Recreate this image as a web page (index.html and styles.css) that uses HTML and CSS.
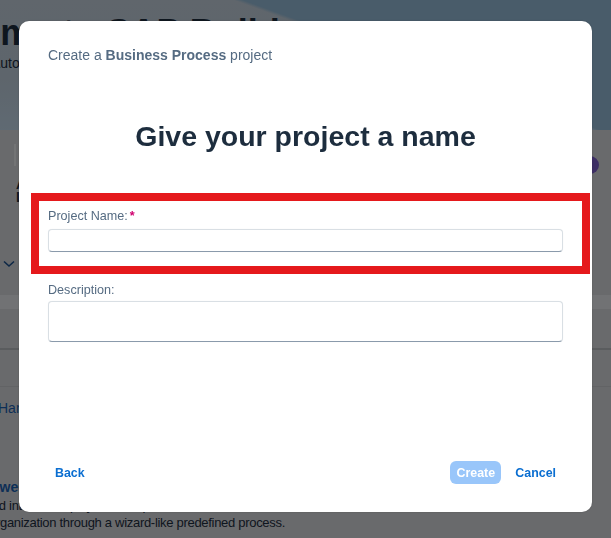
FILE: index.html
```html
<!DOCTYPE html>
<html lang="en">
<head>
<meta charset="utf-8">
<title>Create a Business Process project</title>
<link rel="stylesheet" href="styles.css">
</head>
<body>
<div class="page">
  <header class="hero">
    <h1 class="hero-title">Welcome to SAP Build</h1>
    <p class="hero-sub">Automate processes and build apps</p>
  </header>
  <section class="cards">
    <div class="card-edge"></div>
    <div class="card-title">A<br>L</div>
    <span class="avatar"></span>
  </section>
  <div class="toggle">
    <svg width="12" height="8" viewBox="0 0 12 8"><polyline points="1,1.5 6,6 11,1.5" fill="none" stroke="#1b4f8c" stroke-width="1.6"/></svg>
  </div>
  <div class="band"></div>
  <div class="rule"></div>
  <div class="rule faint"></div>
  <div class="list">
    <a class="list-link">Handle Requests</a>
    <a class="list-link strong">Between Teams</a>
    <p class="list-text first">and internal employees who pursue a new role within</p>
    <p class="list-text second">organization through a wizard-like predefined process.</p>
  </div>
</div>

<div class="overlay">
  <div class="dialog" role="dialog" aria-labelledby="dlg-title">
    <p class="dlg-sub">Create a <b>Business Process</b> project</p>
    <h2 class="dlg-title" id="dlg-title">Give your project a name</h2>
    <div class="field highlighted">
      <label class="field-label" for="pname">Project Name:<span class="req">*</span></label>
      <input class="input" id="pname" type="text">
    </div>
    <div class="field">
      <label class="field-label" for="pdesc">Description:</label>
      <textarea class="input textarea" id="pdesc"></textarea>
    </div>
    <div class="dlg-spacer"></div>
    <footer class="dlg-footer">
      <button class="btn-link" type="button">Back</button>
      <div class="footer-right">
        <button class="btn-primary" type="button" disabled>Create</button>
        <button class="btn-link" type="button">Cancel</button>
      </div>
    </footer>
  </div>
</div>
</body>
</html>
```

FILE: styles.css
```css
* { box-sizing: border-box; }

html, body {
  margin: 0;
  padding: 0;
}

body {
  width: 611px;
  height: 538px;
  overflow: hidden;
  font-family: "Liberation Sans", Arial, sans-serif;
  background: #d2d4d8;
}

/* ---------- background page ---------- */
.page {
  height: 538px;
  overflow: hidden;
}

.hero {
  height: 130px;
  padding-top: 12px;
  background:
    linear-gradient(200deg, #92b8d4 0%, #92b8d4 38%, rgba(146,184,212,0) 39%),
    linear-gradient(180deg, #c0ccd8 0%, #bccbd8 60%, #bfd4e6 100%);
  overflow: hidden;
}

.hero-title {
  margin: 0 0 0 -105px;
  font-size: 36px;
  font-weight: 700;
  color: #1d2d3e;
  white-space: nowrap;
}

.hero-sub {
  margin: 1px 0 0 -9px;
  font-size: 14px;
  color: #1d2d3e;
  white-space: nowrap;
}

.cards {
  height: 124px;
  padding: 14px 0 0 0;
  display: flex;
  position: relative;
}

.card-edge {
  width: 2px;
  height: 22px;
  margin-left: 14px;
  background: #e6e8ea;
}

.card-title {
  margin: 34px 0 0 0;
  font-size: 14px;
  font-weight: 700;
  line-height: 13px;
  color: #1d2d3e;
}

.avatar {
  position: absolute;
  right: 12px;
  top: 26px;
  width: 18px;
  height: 18px;
  border-radius: 50%;
  background: #7a5cc8;
}

.toggle {
  height: 41px;
  padding: 6px 0 0 3px;
  display: flex;
}

.band {
  height: 14px;
  background: #e2e5e8;
}

.rule {
  height: 2px;
  margin-top: 39px;
  background: #b4b8bc;
}

.rule.faint {
  height: 1px;
  margin-top: 36px;
  background: #c4c7ca;
}

.list {
  padding-top: 12px;
  display: flex;
  flex-direction: column;
}

.list-link {
  font-size: 14px;
  line-height: 18px;
  color: #1b5fae;
  margin-left: -2px;
  white-space: nowrap;
}

.list-link.strong {
  margin-top: 61px;
  margin-left: -23px;
  font-weight: 700;
}

.list-text {
  margin: 0;
  font-size: 13px;
  line-height: 17px;
  letter-spacing: -0.3px;
  color: #1d2d3e;
  white-space: nowrap;
}

.list-text.first {
  margin: 1px 0 0 -15px;
}

.list-text.second {
  margin-left: -11px;
}

/* ---------- overlay & dialog ---------- */
.overlay {
  position: fixed;
  inset: 0;
  background: rgba(0, 0, 0, 0.5);
  display: flex;
  justify-content: center;
  align-items: flex-start;
  padding-top: 21px;
}

.dialog {
  width: 573px;
  height: 491px;
  background: #ffffff;
  border-radius: 10px;
  box-shadow: 0 0 2px rgba(0,0,0,0.2);
  display: flex;
  flex-direction: column;
}

.dlg-sub {
  margin: 26px 0 0 29px;
  font-size: 14px;
  line-height: 16px;
  color: #556b82;
}

.dlg-sub b {
  font-weight: 700;
}

.dlg-title {
  margin: 57px 0 0 0;
  text-align: center;
  font-size: 28.5px;
  line-height: 32px;
  font-weight: 700;
  color: #1d2d3e;
}

.field {
  margin: 0 0 0 29px;
  width: 515px;
  display: flex;
  flex-direction: column;
}

.field.highlighted {
  margin: 41px 0 0 12px;
  width: 559px;
  border: 8px solid #e5191c;
  padding: 7px 19px 14px 9px;
}

.field-label {
  font-size: 12.6px;
  line-height: 16px;
  color: #556b82;
  margin-bottom: 5px;
}

.req {
  color: #d0006f;
  margin-left: 2px;
  font-weight: 700;
}

.input {
  display: block;
  width: 100%;
  height: 23px;
  border: 1px solid #d9dfe4;
  border-bottom-color: #8a9aab;
  border-radius: 4px;
  background: #ffffff;
  font-family: inherit;
  font-size: 13px;
  margin: 0;
  padding: 0 8px;
  box-shadow: 0 0 1px rgba(0,0,0,0.08);
}

.textarea {
  height: 41px;
  resize: none;
}

.field:not(.highlighted) {
  margin-top: 8px;
}

.field:not(.highlighted) .field-label {
  margin-bottom: 3px;
}

.dlg-spacer {
  flex: 1;
}

.dlg-footer {
  display: flex;
  justify-content: space-between;
  align-items: center;
  padding: 0 36px 28px 36px;
}

.footer-right {
  display: flex;
  align-items: center;
  gap: 14px;
}

.btn-link {
  border: 0;
  background: none;
  padding: 0;
  font-family: inherit;
  font-size: 12.4px;
  font-weight: 700;
  color: #0a6ed1;
  cursor: pointer;
}

.btn-primary {
  border: 0;
  height: 23px;
  width: 51px;
  padding: 0;
  border-radius: 6px;
  background: #99c6fa;
  color: #ffffff;
  font-family: inherit;
  font-size: 12.4px;
  font-weight: 700;
}
```
